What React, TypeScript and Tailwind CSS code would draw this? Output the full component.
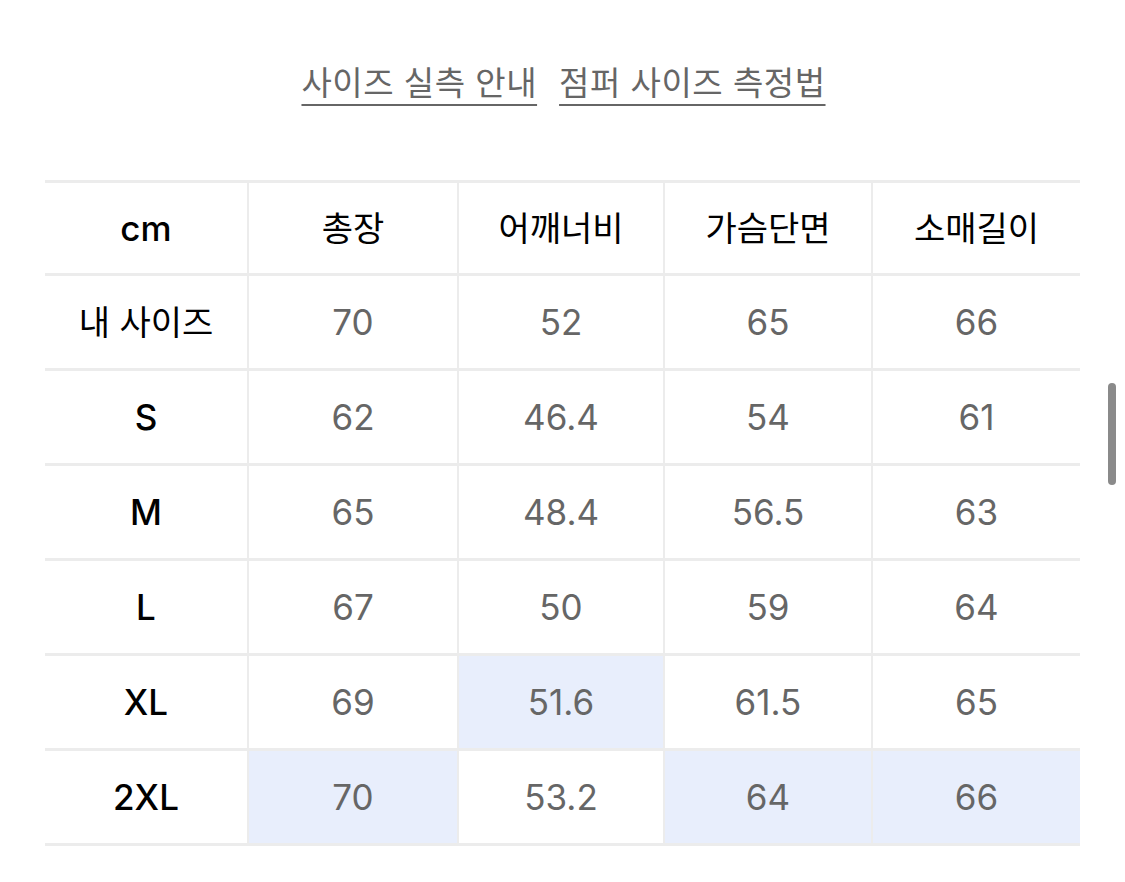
import React from "react";

const headers = ["cm", "총장", "어깨너비", "가슴단면", "소매길이"];
const rows: { label: string; values: string[]; hl: number[] }[] = [
  { label: "내 사이즈", values: ["70", "52", "65", "66"], hl: [] },
  { label: "S", values: ["62", "46.4", "54", "61"], hl: [] },
  { label: "M", values: ["65", "48.4", "56.5", "63"], hl: [] },
  { label: "L", values: ["67", "50", "59", "64"], hl: [] },
  { label: "XL", values: ["69", "51.6", "61.5", "65"], hl: [1] },
  { label: "2XL", values: ["70", "53.2", "64", "66"], hl: [0, 2, 3] },
];

const font = { fontFamily: 'Inter, "Noto Sans CJK KR", sans-serif' };

export default function App() {
  return (
    <div className="relative w-[1125px] h-[882px] bg-white overflow-hidden" style={font}>
      <div className="flex justify-center gap-[22px] pt-[60px] pl-[2px]">
        <span className="text-[33px] leading-[46px] text-[#666] underline decoration-2 underline-offset-[9px] decoration-[#666] tracking-[0.5px]">사이즈 실측 안내</span>
        <span className="text-[33px] leading-[46px] text-[#666] underline decoration-2 underline-offset-[9px] decoration-[#666] tracking-[0.5px]">점퍼 사이즈 측정법</span>
      </div>
      <div className="ml-[45px] mt-[74px] w-[1035px] border-t-[3px] border-b-[3px] border-[#ececec]">
        <div className="grid grid-cols-[202px_210px_206px_208px_209px] h-[90px]">
          {headers.map((h, i) => (
            <div key={i} className={`flex items-center justify-center ${i === 0 ? "text-[35px] font-medium" : "text-[34px]"} text-black ${i > 0 ? "border-l-2 border-[#ececec]" : ""}`}>
              {h}
            </div>
          ))}
        </div>
        {rows.map((r, ri) => (
          <div key={ri} className="grid grid-cols-[202px_210px_206px_208px_209px] h-[95px] border-t-[3px] border-[#ececec]">
            <div className={`flex items-center justify-center ${ri === 0 ? "text-[34px]" : "text-[35px] font-medium"} text-black`}>{r.label}</div>
            {r.values.map((v, vi) => (
              <div key={vi} className={`flex items-center justify-center text-[35px] text-[#666] border-l-2 border-[#ececec] ${r.hl.includes(vi) ? "bg-[#e8eefc]" : ""}`}>
                {v}
              </div>
            ))}
          </div>
        ))}
      </div>
      <div className="absolute left-[1108px] top-[383px] w-[8px] h-[102px] rounded-full bg-[#8a8a8a]" />
    </div>
  );
}
